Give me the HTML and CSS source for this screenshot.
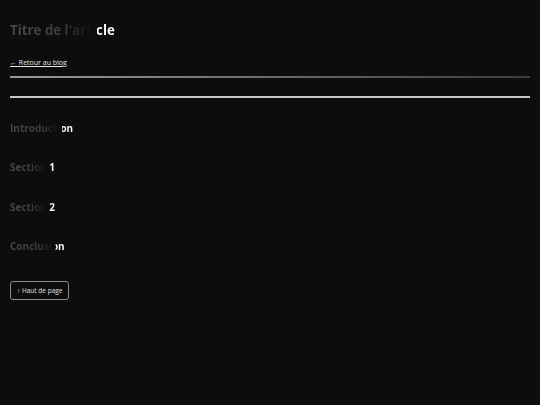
FILE: index.html
```html
<!DOCTYPE html>
<html lang="fr">
<head>
<meta charset="utf-8">
<link rel="stylesheet" href="styles.css">
</head>
<body>
<main class="page">
  <h1 class="title"><span class="shimmer">Titre de l'article</span></h1>
  <a class="back" href="#">← Retour au blog</a>
  <div class="rule rule-fade"></div>
  <div class="rule rule-solid"></div>
  <section class="sections">
    <h2 class="sec"><span class="shimmer">Introduction</span></h2>
    <h2 class="sec"><span class="shimmer">Section 1</span></h2>
    <h2 class="sec"><span class="shimmer">Section 2</span></h2>
    <h2 class="sec"><span class="shimmer">Conclusion</span></h2>
  </section>
  <button class="top">↑ Haut de page</button>
</main>
</body>
</html>
```

FILE: styles.css
```css
html, body {
  margin: 0;
  padding: 0;
  background: #0d0d0d;
  color: #e6e6e6;
  font-family: "Open Sans", "Noto Sans", sans-serif;
}
.page {
  padding: 20px 10px;
  display: flex;
  flex-direction: column;
}
.title {
  margin: 0;
  font-size: 13.3px;
  font-weight: 700;
  line-height: 20px;
}
.shimmer {
  display: inline-block;
  background: linear-gradient(90deg, #4a4a4a 0%, #3c3c3c 50%, #181818 72%, #0d0d0d 79%, #0d0d0d 82.5%, #ffffff 83%, #ffffff 100%);
  -webkit-background-clip: text;
  background-clip: text;
  color: transparent;
}
.back {
  margin-top: 18px;
  align-self: flex-start;
  font-size: 7px;
  line-height: 10px;
  color: #e6e6e6;
  text-decoration: underline;
}
.rule {
  height: 2px;
}
.rule-fade {
  margin-top: 8px;
  background: linear-gradient(90deg, #9a9a9a, #3c3c3c);
}
.rule-solid {
  margin-top: 18px;
  background: #c8c8c8;
}
.sections {
  margin-top: 22px;
  display: flex;
  flex-direction: column;
  gap: 23.3px;
}
.sec {
  margin: 0;
  font-size: 10px;
  font-weight: 700;
  line-height: 16px;
}
.top {
  margin-top: 27px;
  align-self: flex-start;
  background: transparent;
  color: #e0e0e0;
  border: 1px solid #8a8a8a;
  border-radius: 3px;
  font-family: "Open Sans", "Noto Sans", sans-serif;
  font-size: 6.5px;
  padding: 0 6px;
  height: 19px;
}
```
